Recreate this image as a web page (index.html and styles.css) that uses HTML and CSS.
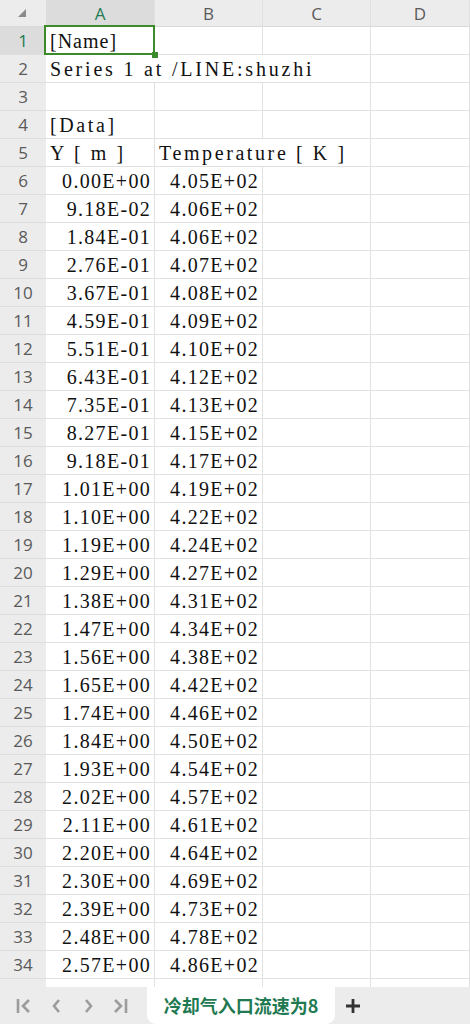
FILE: index.html
```html
<!DOCTYPE html>
<html lang="zh-CN">
<head>
    <meta charset="UTF-8">
    <meta name="viewport" content="width=device-width, initial-scale=1.0">
    <title>冷却气入口流速为8</title>
    <link rel="stylesheet" href="styles.css">
</head>
<body>
    <div class="sheet">
        <table class="grid">
            <colgroup>
                <col class="col-idx">
                <col class="col-a">
                <col class="col-b">
                <col class="col-c">
                <col class="col-d">
            </colgroup>
            <thead>
                <tr>
                    <th class="corner"><span class="corner-tri"></span></th>
                    <th class="col-head ativo">A</th>
                    <th class="col-head">B</th>
                    <th class="col-head">C</th>
                    <th class="col-head">D</th>
                </tr>
            </thead>
            <tbody id="corpo">
                <tr>
                    <th class="row-head ativo">1</th>
                    <td class="texto nome selecionada">[Name]</td>
                    <td></td><td></td><td></td>
                </tr>
                <tr>
                    <th class="row-head">2</th>
                    <td class="texto serie" colspan="3">Series 1 at /LINE:shuzhi</td>
                    <td></td>
                </tr>
                <tr>
                    <th class="row-head">3</th>
                    <td></td><td></td><td></td><td></td>
                </tr>
                <tr>
                    <th class="row-head">4</th>
                    <td class="texto">[Data]</td>
                    <td></td><td></td><td></td>
                </tr>
                <tr>
                    <th class="row-head">5</th>
                    <td class="texto">Y [ m ]</td>
                    <td class="texto" colspan="2">Temperature [ K ]</td>
                    <td></td>
                </tr>
            </tbody>
        </table>
    </div>

    <div class="tabbar">
        <div class="nav">
            <svg width="16" height="16" viewBox="0 0 16 16"><path d="M2 1v14M13 2L7 8l6 6" fill="none" stroke="#9c9c9c" stroke-width="2.6"/></svg>
            <svg width="10" height="16" viewBox="0 0 10 16"><path d="M8 2L3 8l5 6" fill="none" stroke="#9c9c9c" stroke-width="2.6"/></svg>
            <svg width="10" height="16" viewBox="0 0 10 16"><path d="M2 2l5 6-5 6" fill="none" stroke="#9c9c9c" stroke-width="2.6"/></svg>
            <svg width="16" height="16" viewBox="0 0 16 16"><path d="M2 2l6 6-6 6M13 1v14" fill="none" stroke="#9c9c9c" stroke-width="2.6"/></svg>
        </div>
        <div class="aba">冷却气入口流速为8</div>
        <div class="nova-aba">
            <svg width="14" height="14" viewBox="0 0 14 14"><path d="M7 0v14M0 7h14" stroke="#333" stroke-width="2.8"/></svg>
        </div>
    </div>

    <script>
        var dados = [
            ["0.00E+00", "4.05E+02"], ["9.18E-02", "4.06E+02"], ["1.84E-01", "4.06E+02"],
            ["2.76E-01", "4.07E+02"], ["3.67E-01", "4.08E+02"], ["4.59E-01", "4.09E+02"],
            ["5.51E-01", "4.10E+02"], ["6.43E-01", "4.12E+02"], ["7.35E-01", "4.13E+02"],
            ["8.27E-01", "4.15E+02"], ["9.18E-01", "4.17E+02"], ["1.01E+00", "4.19E+02"],
            ["1.10E+00", "4.22E+02"], ["1.19E+00", "4.24E+02"], ["1.29E+00", "4.27E+02"],
            ["1.38E+00", "4.31E+02"], ["1.47E+00", "4.34E+02"], ["1.56E+00", "4.38E+02"],
            ["1.65E+00", "4.42E+02"], ["1.74E+00", "4.46E+02"], ["1.84E+00", "4.50E+02"],
            ["1.93E+00", "4.54E+02"], ["2.02E+00", "4.57E+02"], ["2.11E+00", "4.61E+02"],
            ["2.20E+00", "4.64E+02"], ["2.30E+00", "4.69E+02"], ["2.39E+00", "4.73E+02"],
            ["2.48E+00", "4.78E+02"], ["2.57E+00", "4.86E+02"]
        ];

        var corpo = document.getElementById("corpo");
        var html = "";
        for (var i = 0; i < dados.length; i++) {
            html += '<tr><th class="row-head">' + (i + 6) + '</th>' +
                '<td class="num">' + dados[i][0] + '</td>' +
                '<td class="num">' + dados[i][1] + '</td><td></td><td></td></tr>';
        }
        html += '<tr><th class="row-head">35</th><td></td><td></td><td></td><td></td></tr>';
        corpo.insertAdjacentHTML("beforeend", html);
    </script>
</body>
</html>
```

FILE: styles.css
```css
body {
    margin: 0;
    padding: 0;
    background-color: #ffffff;
    overflow: hidden;
}

.sheet {
    height: 987px;
    overflow: hidden;
}

.grid {
    width: 470px;
    table-layout: fixed;
    border-collapse: separate;
    border-spacing: 0;
}

.col-idx { width: 46px; }
.col-a { width: 109px; }
.col-b { width: 108px; }
.col-c { width: 108px; }
.col-d { width: 99px; }

.grid th {
    font-family: "Open Sans", Arial, sans-serif;
    font-weight: normal;
    color: #5a5a5a;
    background-color: #ececec;
    padding: 0;
    box-sizing: border-box;
}

.corner,
.col-head {
    height: 27px;
    border-bottom: 1px solid #d9d9d9;
    font-size: 17px;
}

.col-head {
    border-right: 1px solid #e0e0e0;
}

.corner {
    position: relative;
}

.corner-tri {
    position: absolute;
    left: 18px;
    top: 9px;
    width: 0;
    height: 0;
    border-left: 8px solid transparent;
    border-bottom: 8px solid #8a8a8a;
}

.row-head {
    height: 28px;
    font-size: 17px;
    border-bottom: 1px solid #dedede;
}

.ativo {
    background-color: #dcdcdc !important;
    color: #1f7a52 !important;
}

.grid td {
    height: 28px;
    box-sizing: border-box;
    padding: 0 4px;
    border-right: 1px solid #e1e1e1;
    border-bottom: 1px solid #e1e1e1;
    font-family: "Liberation Serif", "Noto Sans CJK SC", serif;
    font-size: 20px;
    color: #111;
    white-space: nowrap;
    overflow: visible;
    vertical-align: middle;
    padding-top: 2px;
}

/* imita o espacamento fixo da fonte original */
.grid td.texto {
    letter-spacing: 2.6px;
}

.grid td.serie {
    letter-spacing: 2.8px;
}

.grid td.nome {
    letter-spacing: 1px;
}

.grid td.num {
    text-align: right;
    padding-right: 3px;
    letter-spacing: 1.3px;
}

.selecionada {
    position: relative;
}

.selecionada::after {
    content: "";
    position: absolute;
    left: -2px;
    top: -2px;
    right: -1px;
    bottom: -1px;
    border: 2px solid #3b8a2c;
}

.selecionada::before {
    content: "";
    position: absolute;
    right: -4px;
    bottom: -4px;
    width: 6px;
    height: 6px;
    background-color: #3b8a2c;
    z-index: 1;
}

.tabbar {
    height: 37px;
    background-color: #ececec;
    display: flex;
    align-items: stretch;
}

.nav {
    width: 147px;
    display: flex;
    align-items: center;
    padding-left: 16px;
    box-sizing: border-box;
}

.nav svg:nth-child(1) { margin-right: 19px; }
.nav svg:nth-child(2) { margin-right: 23px; }
.nav svg:nth-child(3) { margin-right: 19px; }

.aba {
    width: 188px;
    background-color: #ffffff;
    border-radius: 0 0 9px 9px;
    display: flex;
    align-items: center;
    justify-content: center;
    font-family: "Noto Sans CJK SC", "Noto Sans", sans-serif;
    font-weight: bold;
    font-size: 18px;
    color: #1f7a52;
    padding-bottom: 2px;
    box-sizing: border-box;
}

.nova-aba {
    display: flex;
    align-items: center;
    padding-left: 11px;
}
```
